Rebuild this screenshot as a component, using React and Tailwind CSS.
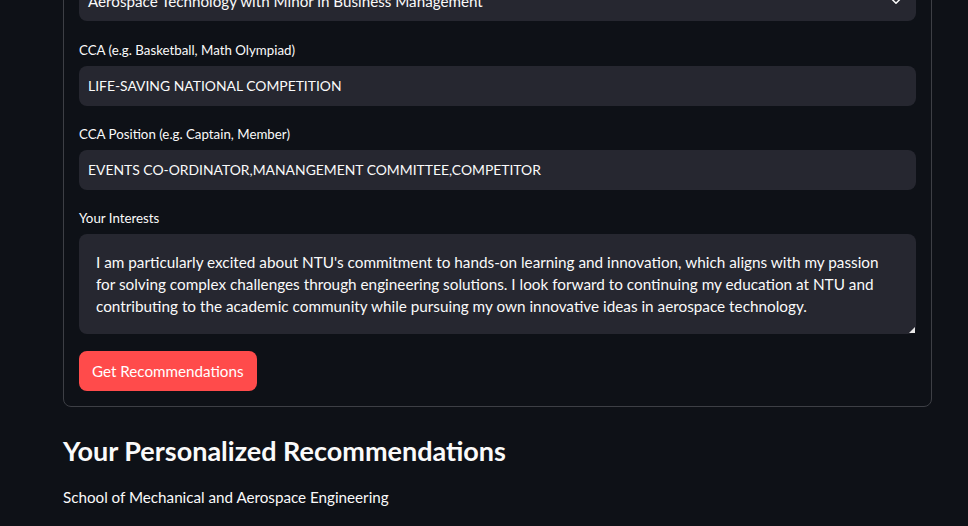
import React from 'react';
import { ChevronDown } from 'lucide-react';

const font = { fontFamily: 'Lato, "Noto Sans", sans-serif' };

const Field = ({ label, value, top }) => (
  <div className={`flex flex-col ${top}`}>
    <label className="text-[13.3px] leading-[20px] text-[#fafafa] mb-[6px] h-[20px] flex items-center">{label}</label>
    <div className="h-[40px] rounded-[8px] bg-[#262730] flex items-center px-[9px] text-[13.9px] text-[#fafafa]">
      {value}
    </div>
  </div>
);

export default function App() {
  return (
    <div className="min-h-screen bg-[#0e1117] text-[#fafafa] overflow-hidden" style={font}>
      <div className="mx-[63px] w-[869px] -mt-[36px]">
        <div className="border border-[#3d3f45] rounded-[8px] px-[15px] pt-[16px] pb-[15px] flex flex-col">
          <div className="h-[40px] rounded-[8px] bg-[#262730] flex items-center justify-between px-[9px] text-[15.2px]">
            <span>Aerospace Technology with Minor in Business Management</span>
            <ChevronDown size={18} className="mr-[2px] text-[#fafafa]" />
          </div>
          <Field top="mt-[19px]" label="CCA (e.g. Basketball, Math Olympiad)" value="LIFE-SAVING NATIONAL COMPETITION" />
          <Field top="mt-[18px]" label="CCA Position (e.g. Captain, Member)" value="EVENTS CO-ORDINATOR,MANANGEMENT COMMITTEE,COMPETITOR" />
          <div className="flex flex-col mt-[18px]">
            <label className="text-[13.3px] leading-[20px] mb-[6px] h-[20px] flex items-center">Your Interests</label>
            <div className="relative h-[100px] rounded-[8px] bg-[#262730] pl-[17px] pr-[30px] pt-[17px] text-[15.3px] leading-[22px]">
              I am particularly excited about NTU's commitment to hands-on learning and innovation, which aligns with my passion for solving complex challenges through engineering solutions. I look forward to continuing my education at NTU and contributing to the academic community while pursuing my own innovative ideas in aerospace technology.
              <span className="absolute right-[1px] bottom-[1px] w-0 h-0 border-l-[6px] border-l-transparent border-b-[6px] border-b-[#e8e8e8]" />
            </div>
          </div>
          <div className="mt-[17px]">
            <button className="h-[40px] px-[13px] rounded-[8px] bg-[#ff4b4b] text-[15.2px] text-white">Get Recommendations</button>
          </div>
        </div>
        <h2 className="mt-[26px] text-[27px] leading-[36px] font-bold">Your Personalized Recommendations</h2>
        <p className="mt-[16px] text-[15.2px] leading-[24px]">School of Mechanical and Aerospace Engineering</p>
      </div>
    </div>
  );
}
